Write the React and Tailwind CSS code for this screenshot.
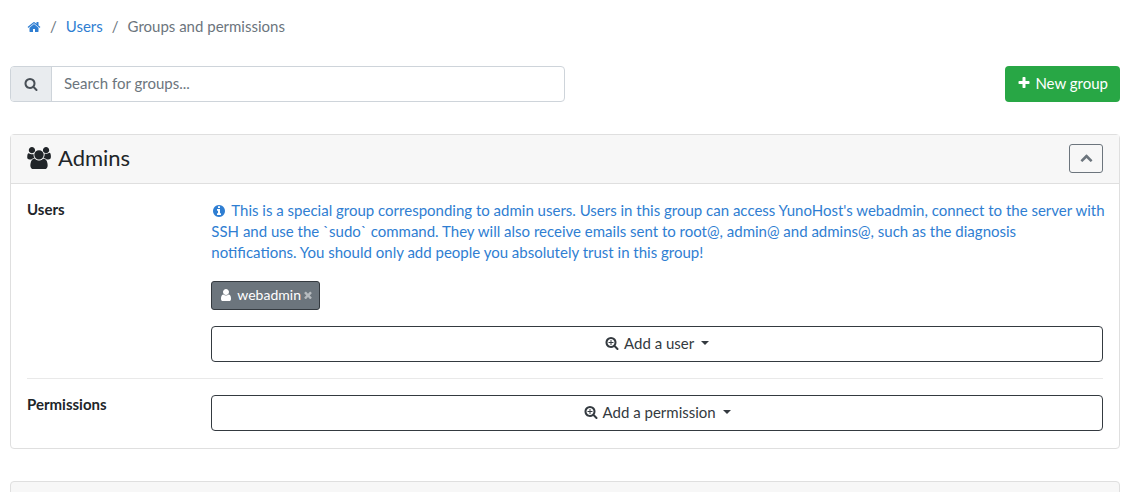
import React, { useState } from "react";

const ICONS = {
  home: "M1472 992v480q0 26-19 45t-45 19h-384v-384h-256v384h-384q-26 0-45-19t-19-45v-480q0-1 .5-3t.5-3l575-474 575 474q1 2 1 6zm223-69l-62 74q-8 9-21 11h-3q-13 0-21-7l-692-577-692 577q-12 8-24 7-13-2-21-11l-62-74q-8-10-7-23.5t11-21.5l719-599q32-26 76-26t76 26l244 204v-195q0-14 9-23t23-9h192q14 0 23 9t9 23v408l219 182q10 8 11 21.5t-7 23.5z",
  search:
    "M1216 832q0-185-131.5-316.5t-316.5-131.5-316.5 131.5-131.5 316.5 131.5 316.5 316.5 131.5 316.5-131.5 131.5-316.5zm512 832q0 52-38 90t-90 38q-54 0-90-38l-343-342q-179 124-399 124-143 0-273.5-55.5t-225-150-150-225-55.5-273.5 55.5-273.5 150-225 225-150 273.5-55.5 273.5 55.5 225 150 150 225 55.5 273.5q0 220-124 399l343 343q37 37 37 90z",
  searchPlus:
    "M1088 800v64q0 13-9.5 22.5t-22.5 9.5h-224v224q0 13-9.5 22.5t-22.5 9.5h-64q-13 0-22.5-9.5t-9.5-22.5v-224h-224q-13 0-22.5-9.5t-9.5-22.5v-64q0-13 9.5-22.5t22.5-9.5h224v-224q0-13 9.5-22.5t22.5-9.5h64q13 0 22.5 9.5t9.5 22.5v224h224q13 0 22.5 9.5t9.5 22.5zm128 32q0-185-131.5-316.5t-316.5-131.5-316.5 131.5-131.5 316.5 131.5 316.5 316.5 131.5 316.5-131.5 131.5-316.5zm512 832q0 53-37.5 90.5t-90.5 37.5q-54 0-90-38l-343-342q-179 124-399 124-143 0-273.5-55.5t-225-150-150-225-55.5-273.5 55.5-273.5 150-225 225-150 273.5-55.5 273.5 55.5 225 150 150 225 55.5 273.5q0 220-124 399l343 343q37 37 37 90z",
  plus: "M1600 736v192q0 40-28 68t-68 28h-416v416q0 40-28 68t-68 28h-192q-40 0-68-28t-28-68v-416h-416q-40 0-68-28t-28-68v-192q0-40 28-68t68-28h416v-416q0-40 28-68t68-28h192q40 0 68 28t28 68v416h416q40 0 68 28t28 68z",
  times:
    "M1490 1322q0 40-28 68l-136 136q-28 28-68 28t-68-28l-294-294-294 294q-28 28-68 28t-68-28l-136-136q-28-28-28-68t28-68l294-294-294-294q-28-28-28-68t28-68l136-136q28-28 68-28t68 28l294 294 294-294q28-28 68-28t68 28l136 136q28 28 28 68t-28 68l-294 294 294 294q28 28 28 68z",
  chevronUp:
    "M1683 1331l-166 165q-19 19-45 19t-45-19l-531-531-531 531q-19 19-45 19t-45-19l-166-165q-19-19-19-45.5t19-45.5l742-741q19-19 45-19t45 19l742 741q19 19 19 45.5t-19 45.5z",
  info: "M1152 1376v-160q0-14-9-23t-23-9h-96v-512q0-14-9-23t-23-9h-320q-14 0-23 9t-9 23v160q0 14 9 23t23 9h96v320h-96q-14 0-23 9t-9 23v160q0 14 9 23t23 9h448q14 0 23-9t9-23zm-128-896v-160q0-14-9-23t-23-9h-192q-14 0-23 9t-9 23v160q0 14 9 23t23 9h192q14 0 23-9t9-23zm640 416q0 209-103 385.5t-279.5 279.5-385.5 103-385.5-103-279.5-279.5-103-385.5 103-385.5 279.5-279.5 385.5-103 385.5 103 279.5 279.5 103 385.5z",
  user: "M1536 1399q0 109-62.5 187t-150.5 78h-854q-88 0-150.5-78t-62.5-187q0-85 8.5-160.5t31.5-152 58.5-131 94-89 134.5-34.5q131 128 313 128t313-128q76 0 134.5 34.5t94 89 58.5 131 31.5 152 8.5 160.5zm-256-887q0 159-112.5 271.5t-271.5 112.5-271.5-112.5-112.5-271.5 112.5-271.5 271.5-112.5 271.5 112.5 112.5 271.5z",
  group:
    "M657 896q-162 5-265 128h-134q-82 0-138-40.5t-56-118.5q0-353 124-353 6 0 43.5 21t97.5 42.5 119 21.5q67 0 133-23-5 37-5 66 0 159 93 293zm1071 637q0 120-73 189.5t-194 69.5h-874q-121 0-194-69.5t-73-189.5q0-53 3.5-103.5t14-109 26.5-108.5 43-97.5 62-81 85.5-53.5 111.5-20q10 0 43 21.5t73 48 107 48 135 21.5 135-21.5 107-48 73-48 43-21.5q61 0 111.5 20t85.5 53.5 62 81 43 97.5 26.5 108.5 14 109 3.5 103.5zm-1024-1277q0 106-75 181t-181 75-181-75-75-181 75-181 181-75 181 75 75 181zm704 384q0 159-112.5 271.5t-271.5 112.5-271.5-112.5-112.5-271.5 112.5-271.5 271.5-112.5 271.5 112.5 112.5 271.5zm576 225q0 78-56 118.5t-138 40.5h-134q-103-123-265-128 93-134 93-293 0-29-5-66 66 23 133 23 59 0 119-21.5t97.5-42.5 43.5-21q124 0 124 353zm-128-609q0 106-75 181t-181 75-181-75-75-181 75-181 181-75 181 75 75 181z",
};

const Icon = ({ name, className = "size-[14px]", viewBox = "0 0 1792 1792" }) => (
  <svg
    className={`shrink-0 ${className}`}
    viewBox={viewBox}
    fill="currentColor"
    aria-hidden="true"
  >
    <path d={ICONS[name]} />
  </svg>
);

const Breadcrumb = () => (
  <nav aria-label="Breadcrumb" className="px-[17px] py-4">
    <ol className="flex items-center gap-[9px] leading-[21px] text-[#6c757d]">
      <li>
        <a href="#home" aria-label="Home" className="block text-[#2f7ed2]">
          <Icon name="home" />
        </a>
      </li>
      <li aria-hidden="true">/</li>
      <li>
        <a href="#users" className="text-[#2f7ed2]">
          Users
        </a>
      </li>
      <li aria-hidden="true">/</li>
      <li aria-current="page">Groups and permissions</li>
    </ol>
  </nav>
);

const DropdownButton = ({ children }) => (
  <button
    type="button"
    aria-haspopup="menu"
    className="flex h-9 w-full items-center justify-center rounded border border-[#343a40] bg-white pb-0.5 text-[#343a40]"
  >
    <Icon name="searchPlus" className="mr-[5px] size-[14px]" />
    {children}
    <span className="ml-[7px] border-x-4 border-t-4 border-x-transparent border-t-[#343a40]" />
  </button>
);

const Row = ({ label, children }) => (
  <section className="grid grid-cols-6 gap-[30px]">
    <h3 className="leading-[19px] font-bold">{label}</h3>
    <div className="col-span-5">{children}</div>
  </section>
);

const GroupCard = () => {
  const [users, setUsers] = useState(["webadmin"]);
  const [open, setOpen] = useState(true);

  return (
    <div className="rounded border border-[#dfdfdf] bg-white">
      <header className="flex items-start justify-between border-b border-[#dfdfdf] bg-[#f7f7f7] px-4 pt-[9px] pb-[10px]">
        <h2 className="flex items-center gap-[7px] text-[22px] leading-[27px]">
          <Icon
            name="group"
            viewBox="64 0 1920 1792"
            className="h-[22px] w-6"
          />
          Admins
        </h2>
        <button
          type="button"
          aria-label="Toggle group"
          aria-expanded={open}
          onClick={() => setOpen(!open)}
          className="flex h-[29px] w-[34px] items-center justify-center rounded-[3px] border border-[#6c757d] pb-0.5 text-[#6c757d]"
        >
          <Icon name="chevronUp" className="size-[13px]" />
        </button>
      </header>

      {open && (
        <div className="px-4 pt-4 pb-[17px]">
          <Row label="Users">
            <p className="-mr-1 mb-[18px] leading-[21px] text-[#2f7ed2]">
              <Icon
                name="info"
                className="mr-[5px] ml-px inline-block size-[14px] align-[-2px]"
              />
              This is a special group corresponding to admin users. Users in
              this group can access YunoHost's webadmin, connect to the server
              with SSH and use the `sudo` command. They will also receive
              emails sent to root@, admin@ and admins@, such as the diagnosis{" "}
              <br className="hidden lg:inline" />
              notifications. You should only add people you absolutely trust in
              this group!
            </p>
            <ul className="mb-4 flex flex-wrap gap-2">
              {users.map((user) => (
                <li
                  key={user}
                  className="flex h-[29px] items-center rounded-[3px] border border-[#343a40] bg-[#6c757d] px-[7px] pb-0.5 text-[14px] text-white"
                >
                  <Icon name="user" className="mr-1 size-[14px]" />
                  {user}
                  <button
                    type="button"
                    aria-label={`Remove ${user}`}
                    onClick={() => setUsers(users.filter((u) => u !== user))}
                    className="ml-[3px] text-[#b5babe]"
                  >
                    <Icon
                      name="times"
                      viewBox="256 256 1280 1280"
                      className="size-2"
                    />
                  </button>
                </li>
              ))}
            </ul>
            <DropdownButton>Add a user</DropdownButton>
          </Row>
          <hr className="my-4 border-[#e9e9e9]" />
          <Row label="Permissions">
            <DropdownButton>Add a permission</DropdownButton>
          </Row>
        </div>
      )}
    </div>
  );
};

const App = () => {
  const [search, setSearch] = useState("");

  return (
    <main className="h-screen overflow-hidden bg-white pr-[6px] pl-[10px] font-[Lato,sans-serif] text-[15px] text-[#212529]">
      <Breadcrumb />

      <div className="mt-[13px] mb-8 flex items-center justify-between">
        <div className="flex h-9 w-1/2 overflow-hidden rounded border border-[#ced4da]">
          <label
            htmlFor="group-search"
            className="flex w-[41px] items-center justify-center border-r border-[#ced4da] bg-[#e9ecef] text-[#495057]"
          >
            <Icon name="search" />
          </label>
          <input
            id="group-search"
            type="text"
            value={search}
            onChange={(e) => setSearch(e.target.value)}
            placeholder="Search for groups..."
            className="min-w-0 flex-1 px-3 pb-0.5 outline-none placeholder:text-[#6c757d]"
          />
        </div>
        <button
          type="button"
          className="flex h-9 items-center gap-1 rounded bg-[#28a745] px-3 pb-0.5 text-white"
        >
          <Icon name="plus" />
          New group
        </button>
      </div>

      <GroupCard />

      <div className="mt-8 h-[50px] rounded-t border border-[#dfdfdf] bg-[#f7f7f7]" />
    </main>
  );
};

export default App;
